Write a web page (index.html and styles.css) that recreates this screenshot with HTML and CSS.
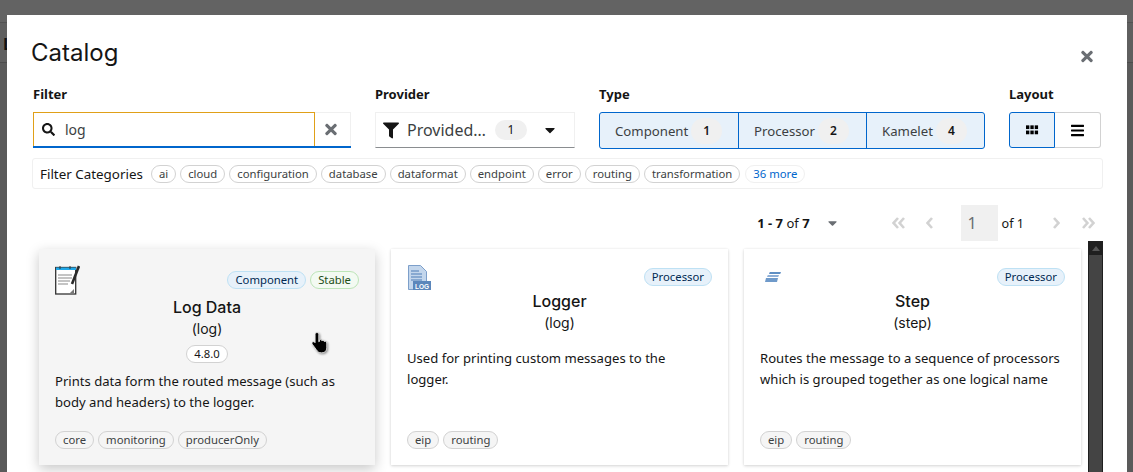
FILE: index.html
```html
<!DOCTYPE html>
<html lang="en">
<head>
    <meta charset="UTF-8">
    <title>Catalog</title>
    <link rel="stylesheet" href="styles.css">
</head>
<body>

    <div class="page-behind">
        <div class="page-top"></div>
        <div class="page-bar"><span class="page-bar-text">Log</span></div>
    </div>

    <div class="modal">
        <header class="modal-header">
            <h1>Catalog</h1>
            <button class="close-button" aria-label="Close">
                <svg class="icon" viewBox="0 0 352 512" width="12" height="17"><path d="M242.72 256l100.07-100.07c12.28-12.28 12.28-32.19 0-44.48l-22.24-22.24c-12.28-12.28-32.19-12.28-44.48 0L176 189.28 75.93 89.21c-12.28-12.28-32.19-12.28-44.48 0L9.21 111.45c-12.28 12.28-12.28 32.19 0 44.48L109.28 256 9.21 356.07c-12.28 12.28-12.28 32.19 0 44.48l22.24 22.24c12.28 12.28 32.2 12.28 44.48 0L176 322.72l100.07 100.07c12.28 12.28 32.2 12.28 44.48 0l22.24-22.24c12.28-12.28 12.28-32.19 0-44.48L242.72 256z"/></svg>
            </button>
        </header>

        <div class="toolbar">
            <div class="field field-filter">
                <label>Filter</label>
                <div class="search-box">
                    <div class="search-input">
                        <svg class="icon" viewBox="0 0 512 512" width="13" height="13"><path d="M505 442.7L405.3 343c-4.5-4.5-10.6-7-17-7H372c27.6-35.3 44-79.7 44-128C416 93.1 322.9 0 208 0S0 93.1 0 208s93.1 208 208 208c48.3 0 92.7-16.4 128-44v16.3c0 6.4 2.5 12.5 7 17l99.7 99.7c9.4 9.4 24.6 9.4 33.9 0l28.3-28.3c9.4-9.4 9.4-24.6.1-34zM208 336c-70.7 0-128-57.2-128-128 0-70.7 57.2-128 128-128 70.7 0 128 57.2 128 128 0 70.7-57.2 128-128 128z"/></svg>
                        <span>log</span>
                    </div>
                    <button class="search-clear" aria-label="Clear">
                        <svg class="icon" viewBox="0 0 352 512" width="12" height="17"><path d="M242.72 256l100.07-100.07c12.28-12.28 12.28-32.19 0-44.48l-22.24-22.24c-12.28-12.28-32.19-12.28-44.48 0L176 189.28 75.93 89.21c-12.28-12.28-32.19-12.28-44.48 0L9.21 111.45c-12.28 12.28-12.28 32.19 0 44.48L109.28 256 9.21 356.07c-12.28 12.28-12.28 32.19 0 44.48l22.24 22.24c12.28 12.28 32.2 12.28 44.48 0L176 322.72l100.07 100.07c12.28 12.28 32.2 12.28 44.48 0l22.24-22.24c12.28-12.28 12.28-32.19 0-44.48L242.72 256z"/></svg>
                    </button>
                </div>
            </div>

            <div class="field field-provider">
                <label>Provider</label>
                <div class="select-box">
                    <svg class="icon" viewBox="0 0 512 512" width="16" height="17"><path d="M487.976 0H24.028C2.71 0-8.047 25.866 7.058 40.971L192 225.941V432c0 7.831 3.821 15.17 10.237 19.662l80 55.98C298.02 518.69 320 507.493 320 487.98V225.941l184.947-184.97C520.021 25.896 509.338 0 487.976 0z"/></svg>
                    <span class="select-text">Provided…</span>
                    <span class="count count-select">1</span>
                    <svg class="icon select-caret" viewBox="0 0 320 512" width="10" height="16"><path d="M31.3 192h257.3c17.8 0 26.7 21.5 14.1 34.1L174.1 354.8c-7.8 7.8-20.5 7.8-28.3 0L17.2 226.1C4.6 213.5 13.5 192 31.3 192z"/></svg>
                </div>
            </div>

            <div class="field field-type">
                <label>Type</label>
                <div class="type-group">
                    <div class="type-item type-component">Component <span class="count">1</span></div>
                    <div class="type-item type-processor">Processor <span class="count">2</span></div>
                    <div class="type-item type-kamelet">Kamelet <span class="count">4</span></div>
                </div>
            </div>

            <div class="field field-layout">
                <label>Layout</label>
                <div class="layout-group">
                    <button class="layout-button active" aria-label="Gallery">
                        <svg class="icon" viewBox="0 0 14 10" width="13" height="10"><rect x="0" y="0" width="3.6" height="4"/><rect x="4.7" y="0" width="3.6" height="4"/><rect x="9.4" y="0" width="3.6" height="4"/><rect x="0" y="5.6" width="3.6" height="4"/><rect x="4.7" y="5.6" width="3.6" height="4"/><rect x="9.4" y="5.6" width="3.6" height="4"/></svg>
                    </button>
                    <button class="layout-button" aria-label="List">
                        <svg class="icon" viewBox="0 0 448 512" width="13" height="15"><path d="M16 132h416c8.837 0 16-7.163 16-16V76c0-8.837-7.163-16-16-16H16C7.163 60 0 67.163 0 76v40c0 8.837 7.163 16 16 16zm0 160h416c8.837 0 16-7.163 16-16v-40c0-8.837-7.163-16-16-16H16c-8.837 0-16 7.163-16 16v40c0 8.837 7.163 16 16 16zm0 160h416c8.837 0 16-7.163 16-16v-40c0-8.837-7.163-16-16-16H16c-8.837 0-16 7.163-16 16v40c0 8.837 7.163 16 16 16z"/></svg>
                    </button>
                </div>
            </div>
        </div>

        <div class="categories">
            <span class="categories-label">Filter Categories</span>
            <span class="tag">ai</span>
            <span class="tag">cloud</span>
            <span class="tag">configuration</span>
            <span class="tag">database</span>
            <span class="tag">dataformat</span>
            <span class="tag">endpoint</span>
            <span class="tag">error</span>
            <span class="tag">routing</span>
            <span class="tag">transformation</span>
            <span class="tag tag-more">36 more</span>
        </div>

        <div class="pagination">
            <span class="page-total"><b>1 - 7</b> of <b>7</b></span>
            <svg class="icon page-total-caret" viewBox="0 0 320 512" width="9" height="14"><path d="M31.3 192h257.3c17.8 0 26.7 21.5 14.1 34.1L174.1 354.8c-7.8 7.8-20.5 7.8-28.3 0L17.2 226.1C4.6 213.5 13.5 192 31.3 192z"/></svg>
            <svg class="page-arrow arrow-first" viewBox="0 0 14 12" width="14" height="12"><path d="M6 1L1.6 6 6 11M12 1L7.6 6 12 11"/></svg>
            <svg class="page-arrow arrow-prev" viewBox="0 0 8 12" width="8" height="12"><path d="M6 1L1.6 6 6 11"/></svg>
            <span class="page-input">1</span>
            <span class="page-of">of 1</span>
            <svg class="page-arrow arrow-next" viewBox="0 0 8 12" width="8" height="12"><path d="M2 1L6.4 6 2 11"/></svg>
            <svg class="page-arrow arrow-last" viewBox="0 0 14 12" width="14" height="12"><path d="M2 1L6.4 6 2 11M8 1L12.4 6 8 11"/></svg>
        </div>

        <div class="scroll-area">
            <div class="card-grid">
                <article class="card card-hover">
                    <div class="card-head card-head-tall">
                        <svg class="card-icon" viewBox="0 0 25 30" width="25" height="30">
                            <rect x="0.7" y="2.5" width="20" height="26.5" fill="#fff" stroke="#333" stroke-width="1.3"/>
                            <rect x="1" y="2.500" width="20" height="2.500" fill="#1ea7e8"/>
                            <path d="M5 1v3M15 1v3" stroke="#333" stroke-width="1"/>
                            <path d="M3 10h14M3 13h14M3 16h12M3 19h10" stroke="#8a8a8a" stroke-width="1.2"/>
                            <path d="M24 1l-7 18" stroke="#2a2a2a" stroke-width="2.6"/>
                            <path d="M15 28l4-4v4z" fill="#777"/>
                        </svg>
                        <div class="card-tags">
                            <span class="tag tag-blue">Component</span>
                            <span class="tag tag-green">Stable</span>
                        </div>
                    </div>
                    <h2>Log Data</h2>
                    <div class="card-sub">(log)</div>
                    <div class="card-version"><span class="tag tag-version">4.8.0</span></div>
                    <p>Prints data form the routed message (such as body and headers) to the logger.</p>
                    <div class="card-foot">
                        <span class="tag">core</span>
                        <span class="tag">monitoring</span>
                        <span class="tag">producerOnly</span>
                    </div>
                </article>

                <article class="card">
                    <div class="card-head">
                        <svg class="card-icon" viewBox="0 0 24 25" width="24" height="25">
                            <path d="M1.500.5h12l6 6v18h-18z" fill="#c3d6ec" stroke="#7d9fca"/>
                            <path d="M4 6h8M4 9h11M4 12h11M4 15h11" stroke="#4f7db5" stroke-width="1.1"/>
                            <rect x="6" y="16" width="18" height="9" fill="#5b86bb"/>
                            <text class="log-mark" x="15" y="23.500">LOG</text>
                        </svg>
                        <div class="card-tags"><span class="tag tag-blue">Processor</span></div>
                    </div>
                    <h2>Logger</h2>
                    <div class="card-sub">(log)</div>
                    <p class="card-text">Used for printing custom messages to the logger.</p>
                    <div class="card-foot">
                        <span class="tag">eip</span>
                        <span class="tag">routing</span>
                    </div>
                </article>

                <article class="card">
                    <div class="card-head">
                        <svg class="card-icon" viewBox="0 0 24 24" width="24" height="24">
                            <path d="M9.800 7h11.200l-.8 2H9z" fill="#5f8fc4"/>
                            <path d="M7.800 10h11.200l-.8 2H7z" fill="#8fb0d8"/>
                            <path d="M6 13h12l-1 4H5z" fill="#6f9aca"/>
                        </svg>
                        <div class="card-tags"><span class="tag tag-blue">Processor</span></div>
                    </div>
                    <h2>Step</h2>
                    <div class="card-sub">(step)</div>
                    <p class="card-text">Routes the message to a sequence of processors which is grouped together as one logical name</p>
                    <div class="card-foot">
                        <span class="tag">eip</span>
                        <span class="tag">routing</span>
                    </div>
                </article>
            </div>
            <div class="scrollbar">
                <div class="scrollbar-arrow"></div>
                <div class="scrollbar-thumb"></div>
            </div>
        </div>
    </div>

    <svg class="cursor" viewBox="1 1 14 18" width="18" height="22">
        <path d="M5.500 1.500c1 0 1.500.7 1.500 1.500v6l.5-.2V7.500c1-.6 1.800-.2 2 .6.900-.5 1.800-.2 2 .7.900-.4 2 0 2 1.200v4c0 2.500-1.500 4-4 4H9c-2 0-3-1-4-2.500L1.700 11c-.6-1-.2-1.800.6-2 .7-.2 1.300.2 1.700.8V3c0-.8.500-1.500 1.500-1.500z" fill="#000" stroke="#fff" stroke-width="0.6"/>
    </svg>

</body>
</html>
```

FILE: styles.css
```css
* {
    box-sizing: border-box;
}

html, body {
    height: 100%;
    overflow: hidden;
}

body {
    margin: 0;
    background-color: #5a5a5a;
    font-family: "Noto Sans", sans-serif;
    font-size: 14px;
    color: #151515;
}

button {
    font: inherit;
    background: none;
    border: none;
    padding: 0;
    cursor: pointer;
}

.icon {
    display: block;
    fill: currentColor;
}

/* page behind the modal */
.page-behind {
    height: 64px;
}

.page-top {
    height: 23px;
    background-color: #636363;
    border-bottom: 1px solid #525252;
}

.page-bar {
    height: 40px;
    background-color: #5f5f5f;
    border-bottom: 1px solid #4c4c4c;
    padding: 10px 0 0 3px;
}

.page-bar-text {
    font-weight: 700;
    font-size: 16px;
    color: #111;
}

/* modal */
.modal {
    position: absolute;
    top: 15px;
    left: 7px;
    width: 1120px;
    height: 600px;
    background-color: #fff;
    padding: 0 24px;
}

.modal-header {
    display: flex;
    justify-content: space-between;
    height: 69px;
}

.modal-header h1 {
    margin: 20px 0 0;
    font-family: Inter, sans-serif;
    font-size: 24px;
    line-height: 36px;
    font-weight: 400;
}

.close-button {
    height: 17px;
    margin: 33px 10px 0 0;
    color: #6a6e73;
}

.toolbar {
    display: flex;
    gap: 24px;
    padding-left: 2px;
}

.field label {
    display: block;
    padding-top: 1px;
    font-weight: 700;
    font-size: 13px;
    line-height: 19px;
    margin-bottom: 8px;
}

.field-filter {
    width: 318px;
}

.field-provider {
    width: 200px;
}

.search-box {
    display: flex;
    height: 36px;
    border-bottom: 2px solid #06c;
}

.search-input {
    flex: 1;
    display: flex;
    align-items: center;
    gap: 10px;
    padding-left: 8px;
    border: 1px solid #e0a018;
    border-bottom: none;
}

.search-input span {
    color: #3c3f42;
    font-size: 14px;
}

.search-clear {
    width: 36px;
    display: flex;
    align-items: center;
    justify-content: center;
    padding-right: 3px;
    color: #6a6e73;
    border-top: 1px solid #f0f0f0;
    border-right: 1px solid #f0f0f0;
}

.select-box {
    display: flex;
    align-items: center;
    height: 36px;
    padding-left: 7px;
    border: 1px solid #f0f0f0;
    border-bottom: 1px solid #8a8d90;
}

.select-text {
    margin-left: 8px;
    font-size: 16px;
    color: #3c3f42;
}

.count {
    display: inline-block;
    text-align: center;
    background-color: #f0f0f0;
    border-radius: 14px;
    font-size: 12px;
    font-weight: 600;
}

.count-select {
    width: 32px;
    height: 20px;
    line-height: 20px;
    margin-left: 9px;
    font-weight: 400;
}

.select-caret {
    margin-left: 18px;
}

.type-group {
    display: flex;
    height: 37px;
    border: 1px solid #06c;
    border-radius: 3px;
    background-color: #e7f1fa;
}

.type-item {
    display: flex;
    align-items: center;
    gap: 3px;
    padding-left: 15px;
    color: #3c3f42;
    font-size: 13.2px;
}

.type-item .count {
    width: 31px;
    height: 26px;
    line-height: 26px;
    color: #151515;
}

.type-component {
    width: 138px;
}

.type-processor {
    width: 128px;
    border-left: 1px solid #06c;
}

.type-kamelet {
    width: 118px;
    border-left: 1px solid #06c;
}

.layout-group {
    display: flex;
    height: 36px;
}

.layout-button {
    width: 46px;
    display: flex;
    align-items: center;
    justify-content: center;
    border: 1px solid #d2d2d2;
    border-left: none;
    border-radius: 0 3px 3px 0;
}

.layout-button.active {
    background-color: #e7f1fa;
    border: 1px solid #06c;
    border-radius: 3px 0 0 3px;
}

/* tags */
.tag {
    display: inline-block;
    height: 18px;
    line-height: 16px;
    padding: 0 7px;
    font-size: 11.3px;
    color: #3c3f42;
    background-color: #fafafa;
    border: 1px solid #d2d2d2;
    border-radius: 9px;
    white-space: nowrap;
}

.categories {
    display: flex;
    align-items: center;
    gap: 4px;
    height: 31px;
    margin: 9px 0 0 1px;
    width: 1071px;
    padding-left: 7px;
    border: 1px solid #f0f0f0;
    border-radius: 3px;
}

.categories-label {
    margin-right: 4px;
    font-size: 13.4px;
    color: #151515;
}

.categories .tag {
    background-color: #fff;
}

.tag-more {
    color: #06c;
    border-color: #f0f0f0;
    margin-left: 1px;
}

/* pagination */
.pagination {
    display: flex;
    align-items: center;
    height: 36px;
    margin-top: 16px;
    width: 1072px;
    justify-content: flex-end;
    padding-right: 8px;
}

.page-total {
    font-size: 13px;
}

.page-total-caret {
    margin-left: 18px;
    color: #6a6e73;
}

.page-arrow {
    fill: none;
    stroke: #d2d2d2;
    stroke-width: 2.6;
}

.arrow-first {
    margin-left: 55px;
}

.arrow-prev {
    margin-left: 20px;
}

.page-input {
    width: 37px;
    height: 36px;
    line-height: 36px;
    padding-left: 7px;
    margin-left: 27px;
    font-size: 16px;
    color: #6a6e73;
    background-color: #f0f0f0;
}

.page-of {
    margin-left: 4px;
    font-size: 12.6px;
}

.arrow-next {
    margin-left: 28px;
}

.arrow-last {
    margin-left: 21px;
}

/* cards */
.scroll-area {
    display: flex;
    width: 1072px;
    padding-left: 7px;
}

.card-grid {
    display: grid;
    grid-template-columns: repeat(3, 337px);
    gap: 16px;
    padding-top: 8px;
}

.card {
    display: flex;
    flex-direction: column;
    height: 216px;
    padding: 16px;
    background-color: #fff;
    box-shadow: 0 1px 3px rgba(3, 3, 3, 0.16), 0 0 2px rgba(3, 3, 3, 0.06);
}

.card-hover {
    margin-left: 1px;
    background-color: #f5f5f5;
    box-shadow: 0 4px 12px rgba(3, 3, 3, 0.22);
}

.card-head {
    display: flex;
    justify-content: space-between;
    align-items: flex-start;
    height: 26px;
}

.card-head-tall {
    height: 32px;
}

.card-icon {
    display: block;
}

.log-mark {
    font-family: "Liberation Sans", sans-serif;
    font-size: 6.5px;
    font-weight: 700;
    fill: #fff;
    text-anchor: middle;
}

.card-tags {
    display: flex;
    gap: 4px;
    margin-top: 3px;
}

.card-head-tall .card-tags {
    margin-top: 6px;
}

.tag-blue {
    background-color: #e7f1fa;
    border-color: #bee1f4;
    color: #002952;
}

.tag-green {
    background-color: #f3faf2;
    border-color: #bde5b8;
    color: #1e4f18;
}

.tag-version {
    background-color: #fff;
    color: #151515;
}

.card h2 {
    margin: 0;
    text-align: center;
    font-family: Inter, sans-serif;
    font-size: 16px;
    font-weight: 500;
    line-height: 21px;
}

.card-sub {
    text-align: center;
    font-family: Inter, sans-serif;
    font-size: 14px;
    line-height: 21px;
}

.card-version {
    text-align: center;
    height: 22px;
    padding-top: 4px;
}

.card p {
    margin: 10px 0 0;
    max-width: 301px;
    font-size: 13.1px;
    line-height: 21px;
}

.card p.card-text {
    margin-top: 15px;
}

.card-foot {
    display: flex;
    gap: 4px;
    margin-top: auto;
}

.card-foot .tag {
    background-color: #f5f5f5;
}

.scrollbar {
    width: 15px;
    height: 240px;
    margin-left: 7px;
    background-color: #1f1f1f;
    padding: 0 1px;
}

.scrollbar-arrow {
    width: 0;
    height: 0;
    margin: 5px auto 4px;
    border-left: 4px solid transparent;
    border-right: 4px solid transparent;
    border-bottom: 5px solid #555;
}

.scrollbar-thumb {
    height: 220px;
    background-color: #444;
}

.cursor {
    position: absolute;
    left: 311px;
    top: 332px;
    filter: drop-shadow(1px 1px 1px rgba(0, 0, 0, 0.45));
}
```
